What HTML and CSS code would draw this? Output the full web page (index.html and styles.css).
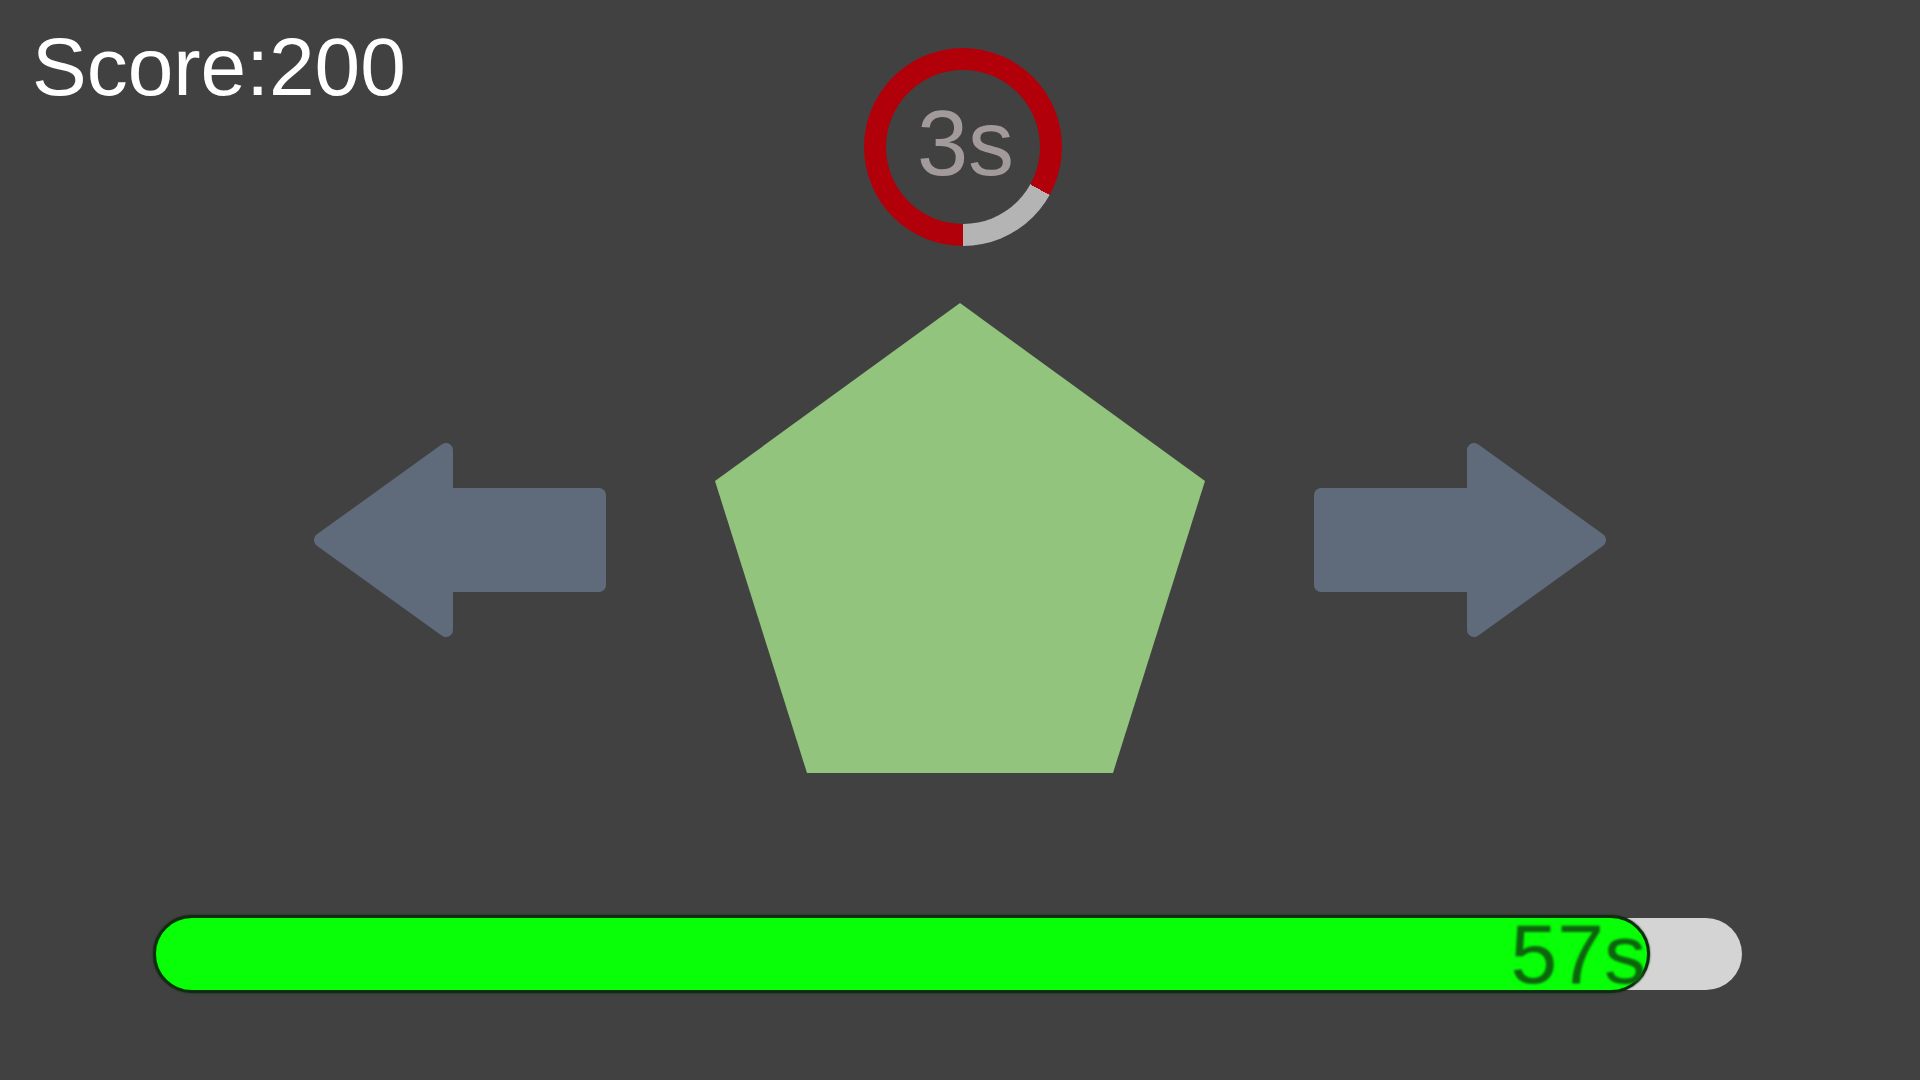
FILE: index.html
```html
<!DOCTYPE html>
<html lang="en">
<head>
<meta charset="utf-8">
<title>Shape Game</title>
<link rel="stylesheet" href="styles.css">
</head>
<body>
<div class="screen">
  <header class="top">
    <div class="score">Score:200</div>
    <div class="timer">
      <div class="timer-hole"><span class="timer-text">3s</span></div>
    </div>
    <div class="spacer"></div>
  </header>

  <main class="stage">
    <svg class="arrow" viewBox="0 0 292 194" width="292" height="194" aria-label="left">
      <polygon points="7,97 132,7 132,52 285,52 285,142 132,142 132,187" />
    </svg>
    <svg class="shape" viewBox="0 0 490 470" width="490" height="470" aria-label="pentagon">
      <polygon points="245,0 490,178 398,470 92,470 0,178" />
    </svg>
    <svg class="arrow" viewBox="0 0 292 194" width="292" height="194" aria-label="right">
      <polygon points="285,97 160,7 160,52 7,52 7,142 160,142 160,187" />
    </svg>
  </main>

  <footer class="bar-area">
    <div class="track">
      <div class="fill" style="width: 1497px;"><span class="fill-text">57s</span></div>
    </div>
  </footer>
</div>
</body>
</html>
```
FILE: styles.css
```css
html, body {
  margin: 0;
  padding: 0;
  background: #414141;
}

.screen {
  width: 1920px;
  height: 1080px;
  display: flex;
  flex-direction: column;
  font-family: "Liberation Sans", Arial, sans-serif;
  overflow: hidden;
}

.top {
  display: grid;
  grid-template-columns: 1fr 198px 1fr;
  align-items: start;
  padding: 26px 0 0 6px;
}

.score {
  margin-left: 26px;
  font-size: 82px;
  line-height: 82px;
  color: #ffffff;
  white-space: nowrap;
}

.timer {
  margin-top: 22px;
  width: 198px;
  height: 198px;
  border-radius: 50%;
  background: conic-gradient(from 180deg, #b10009 0deg 299deg, #b4b4b4 299deg 360deg);
  display: flex;
  align-items: center;
  justify-content: center;
}

.timer-hole {
  width: 154px;
  height: 154px;
  border-radius: 50%;
  background: #414141;
  display: flex;
  align-items: center;
  justify-content: center;
  box-sizing: border-box;
  padding: 0 0 9px 5px;
}

.timer-text {
  font-size: 92px;
  line-height: 92px;
  color: #a39b9b;
}

.stage {
  margin-top: 57px;
  display: flex;
  justify-content: center;
  align-items: flex-start;
  gap: 109px;
}

.arrow {
  margin-top: 140px;
  display: block;
}

.arrow polygon {
  fill: #5f6b7a;
  stroke: #5f6b7a;
  stroke-width: 14;
  stroke-linejoin: round;
}

.shape {
  display: block;
}

.shape polygon {
  fill: #92c47e;
}

.bar-area {
  margin-top: 145px;
  padding-left: 156px;
}

.track {
  width: 1586px;
  height: 72px;
  border-radius: 36px;
  background: #d4d4d4;
  display: flex;
  align-items: center;
}

.fill {
  flex: none;
  box-sizing: border-box;
  height: 78px;
  margin-left: -3px;
  border: 3px solid #0c2e0c;
  border-radius: 39px;
  background: #08ff08;
  box-shadow: 0 0 2px #0c2e0c;
  display: flex;
  justify-content: flex-end;
  align-items: center;
  padding-right: 1px;
}

.fill-text {
  font-size: 84px;
  line-height: 72px;
  color: #0d640d;
  filter: blur(0.8px);
}
```
